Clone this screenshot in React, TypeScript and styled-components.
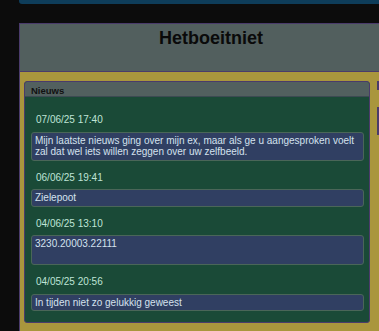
import styled, { createGlobalStyle } from "styled-components";

const GlobalStyle = createGlobalStyle`
  html, body {
    margin: 0;
    padding: 0;
    background: #0c0c0c;
    font-family: "Liberation Sans", Arial, sans-serif;
    overflow: hidden;
  }
`;

const newsItems = [
  {
    date: "07/06/25 17:40",
    text: "Mijn laatste nieuws ging over mijn ex, maar als ge u aangesproken voelt zal dat wel iets willen zeggen over uw zelfbeeld.",
  },
  { date: "06/06/25 19:41", text: "Zielepoot" },
  { date: "04/06/25 13:10", text: "3230.20003.22111", tall: true },
  { date: "04/05/25 20:56", text: "In tijden niet zo gelukkig geweest" },
];

const App = () => {
  return (
    <>
      <GlobalStyle />
      <Page>
        <TopBar />
        <Panel>
          <Panel_Header>
            <Panel_Title>Hetboeitniet</Panel_Title>
          </Panel_Header>
          <Panel_Body>
            <Card>
              <Card_Header>Nieuws</Card_Header>
              <Card_Body>
                {newsItems.map((item) => (
                  <News_Item key={item.date}>
                    <News_Date>{item.date}</News_Date>
                    <News_Text $tall={!!item.tall}>{item.text}</News_Text>
                  </News_Item>
                ))}
              </Card_Body>
            </Card>
            <Side_Column>
              <Side_Card $height={9} />
              <Side_Card $height={28} />
            </Side_Column>
          </Panel_Body>
        </Panel>
      </Page>
    </>
  );
};

export default App;

const Page = styled.div`
  width: 379px;
  height: 331px;
  padding-left: 19px;
  box-sizing: border-box;
  overflow: hidden;
`;

const TopBar = styled.div`
  width: 400px;
  height: 4px;
  background: #0e3d5a;
  border-bottom-left-radius: 3px;
`;

const Panel = styled.section`
  margin-top: 19px;
  width: 382px;
  border: 1px solid #4a3b6b;
  border-bottom: none;
  background: #a9963d;
`;

const Panel_Header = styled.header`
  height: 43px;
  background: #525f5e;
  border-bottom: 1px solid #4a3b6b;
  display: flex;
  justify-content: center;
  align-items: flex-start;
  padding-top: 4px;
`;

const Panel_Title = styled.h1`
  margin: 0;
  font-size: 18px;
  font-weight: bold;
  color: #0a0a0a;
  line-height: normal;
`;

const Panel_Body = styled.div`
  display: grid;
  grid-template-columns: 346px 1fr;
  column-gap: 7px;
  align-items: start;
  padding: 9px 4px 20px 4px;
`;

const Card = styled.article`
  border: 1px solid #4a3b6b;
  border-radius: 3px;
  overflow: hidden;
  background: #1a4a37;
`;

const Card_Header = styled.div`
  height: 15px;
  box-sizing: border-box;
  padding: 2px 0 0 6px;
  background: #52605f;
  border-bottom: 1px solid #3c4a52;
  font-size: 9.5px;
  font-weight: bold;
  line-height: 13px;
  color: #111;
`;

const Card_Body = styled.div`
  padding: 6px 5px 11px 6px;
`;

const News_Item = styled.div`
  padding-top: 11px;
`;

const News_Date = styled.div`
  padding-left: 5px;
  margin-bottom: 6px;
  font-size: 10px;
  line-height: 11.5px;
  color: #bfe4d6;
`;

const News_Text = styled.div<{ $tall: boolean }>`
  min-height: ${({ $tall }) => ($tall ? "24px" : "0")};
  padding: 2px 3px 2px 3px;
  background: #303f62;
  border: 1px solid #4a6658;
  border-radius: 3px;
  font-size: 10px;
  line-height: 11.5px;
  color: #d4e2ee;
`;

const Side_Column = styled.div`
  display: flex;
  flex-direction: column;
  gap: 17px;
`;

const Side_Card = styled.div<{ $height: number }>`
  height: ${({ $height }) => $height}px;
  border-left: 2px solid #4a3b6b;
  background: #a9963d;
`;
